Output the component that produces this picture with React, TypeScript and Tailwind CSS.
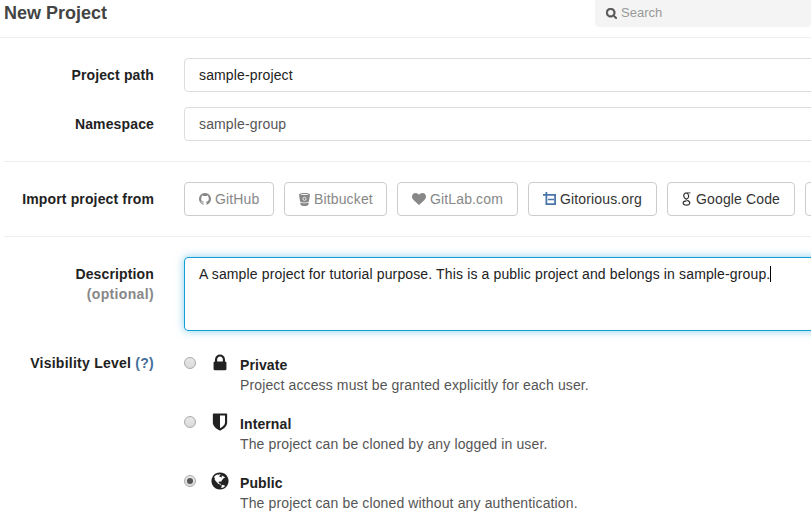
import type { ReactNode } from "react";

const GLYPHS = {
  search:
    "M1216 832q0-185-131.500-316.500t-316.500-131.500-316.500 131.500-131.500 316.500 131.500 316.500 316.500 131.500 316.500-131.500 131.500-316.500zm512 832q0 52-38 90t-90 38q-54 0-90-38l-343-342q-179 124-399 124-143 0-273.500-55.500t-225-150-150-225-55.500-273.500 55.500-273.500 150-225 225-150 273.500-55.500 273.500 55.500 225 150 150 225 55.500 273.500q0 220-124 399l343 343q37 37 37 90z",
  github:
    "M896 128q209 0 385.500 103t279.500 279.500 103 385.500q0 251-146.500 451.500t-378.500 277.500q-27 5-40-7t-13-30q0-3 .5-76.500t.5-134.500q0-97-52-142 57-6 102.500-18t94-39 81-66.500 53-105 20.500-150.500q0-119-79-206 37-91-8-204-28-9-81 11t-92 44l-38 24q-93-26-192-26t-192 26q-16-11-42.500-27t-83.500-38.500-85-13.500q-45 113-8 204-79 87-79 206 0 85 20.500 150t52.500 105 80.500 67 94 39 102.500 18q-39 36-49 103-21 10-45 15t-57 5-65.500-21.500-55.500-62.500q-19-32-48.500-52t-49.500-24l-20-3q-21 0-29 4.500t-5 11.500 9 14 13 12l7 5q22 10 43.500 38t31.500 51l10 23q13 38 44 61.500t67 30 69.500 7 55.500-3.500l23-4q0 38 .5 88.500t.5 54.500q0 18-13 30t-40 7q-232-77-378.500-277.500t-146.500-451.500q0-209 103-385.500t279.500-279.500 385.500-103z",
  heart:
    "M896 1664q-26 0-44-18l-624-602q-10-8-27.500-26t-55.500-65.500-68-97.500-53.500-121-23.500-138q0-220 127-344t351-124q62 0 126.500 21.500t120 58 95.500 68.500 76 68q36-36 76-68t95.500-68.500 120-58 126.500-21.500q224 0 351 124t127 344q0 221-229 450l-623 600q-18 18-44 18z",
  lock: "M640 768h512v-192q0-106-75-181t-181-75-181 75-75 181v192zm832 96v576q0 40-28 68t-68 28h-960q-40 0-68-28t-28-68v-576q0-40 28-68t68-28h32v-192q0-184 132-316t316-132 316 132 132 316v192h32q40 0 68 28t28 68z",
  shield:
    "M1344 960v-640h-448v1137q119-63 213-137 235-184 235-360zm192-768v768q0 86-33.500 170.500t-83 150-118 127.500-126.500 103-121 77.500-89.500 49.500-42.500 20q-12 6-26 6t-26-6q-16-7-42.500-20t-89.500-49.500-121-77.500-126.500-103-118-127.500-83-150-33.500-170.500v-768q0-26 19-45t45-19h1152q26 0 45 19t19 45z",
  globe:
    "M896 128q209 0 385.500 103t279.500 279.500 103 385.500-103 385.500-279.500 279.500-385.500 103-385.500-103-279.500-279.500-103-385.500 103-385.500 279.500-279.500 385.500-103zm274 521q-2 1-9.500 9.500t-13.500 9.500q2 0 4.500-5t5-11 3.500-7q6-7 22-15 14-6 52-12 34-8 51 11-2-2 9.500-13t14.500-12q3-2 15-4.500t15-7.500l2-22q-12 1-17.500-7t-6.500-21q0 2-6 8 0-7-4.500-8t-11.500 1-9 1q-10-3-15-7.500t-8-16.500-4-15q-2-5-9.500-11t-9.500-10q-1-2-2.500-5.500t-3-6.500-4-5.500-5.500-2.500-7 5-7.500 10-4.500 5q-3-2-6-1.500t-4.500 1-4.500 3-5 3.500q-3 2-8.500 3t-8.500 2q15-5-1-11-10-4-16-3 9-4 7.500-12t-8.500-14h5q-1-4-8.500-8.500t-17.500-8.500-13-6q-8-5-34-9.500t-33-.5q-5 6-4.500 10.500t4 14 3.500 12.500q1 6-5.500 13t-6.500 12q0 7 14 15.500t10 21.500q-3 8-16 16t-16 12q-5 8-1.500 18.500t10.500 16.500q2 2 1.500 4t-3.500 4.500-5.500 4-6.500 3.500l-3 2q-11 5-20.500-6t-13.500-26q-7-25-16-30-23-8-29 1-5-13-41-26-25-9-58-4 6-1 0-15-7-15-19-12 3-6 4-17.500t1-13.500q3-13 12-23 1-1 7-8.500t9.500-13.500.5-6q35 4 50-11 5-5 11.500-17t10.500-17q9-6 14-5.500t14.500 5.500 14.500 5q14 1 15.500-11t-7.500-20q12 1 3-17-4-7-8-9-12-4-27 5-8 4 2 8-1-1-9.500 10.500t-16.500 17.500-16-5q-1-1-5.500-13.500t-9.500-13.500q-8 0-16 15 3-8-11-15t-24-8q19-12-8-27-7-4-20.500-5t-19.500 4q-5 7-5.500 11.500t5 8 10.500 5.500 11.500 4 8.500 3q14 10 8 14-2 1-8.500 3.500t-11.500 4.500-6 4q-3 4 0 14t-2 14q-5-5-9-17.500t-7-16.500q7 9-25 6l-10-1q-4 0-16 2t-20.500 1-13.500-8q-4-8 0-20 1-4 4-2-4-3-11-9.500t-10-8.500q-46 15-94 41 6 1 12-1 5-2 13-6.500t10-5.500q34-14 42-7l5-5q14 16 20 25-7-4-30-1-20 6-22 12 7 12 5 18-4-3-11.500-10t-14.500-11-15-5q-16 0-22 1-146 80-235 222 7 7 12 8 4 1 5 9t2.500 11 11.500-3q9 8 3 19 1-1 44 27 19 17 21 21 3 11-10 18-1-2-9-9t-9-4q-3 5 .5 18.500t10.500 12.500q-7 0-9.500 16t-2.500 35.500-1 23.500l2 1q-3 12 5.500 34.500t21.500 19.500q-13 3 20 43 6 8 8 9 3 2 12 7.500t15 10 10 10.500q4 5 10 22.500t14 23.500q-2 6 9.500 20t10.500 23q-1 0-2.500 1t-2.500 1q3 7 15.500 14t15.500 13q1 3 2 10t3 11 8 2q2-20-24-62-15-25-17-29-3-5-5.500-15.500t-4.500-14.500q2 0 6 1.500t8.500 3.500 7.500 4 2 3q-3 7 2 17.500t12 18.500 17 19 12 13q6 6 14 19.500t0 13.500q9 0 20 10.500t17 19.500q5 8 8 26t5 24q2 7 8.500 13.500t12.500 9.500l16 8 13 7q5 2 18.500 10.500t21.500 11.500q10 4 16 4t14.500-2.500 13.500-3.500q15-2 29 15t21 21q36 19 55 11-2 1 .5 7.500t8 15.500 9 14.500 5.500 8.500q5 6 18 15t18 15q6-4 7-9-3 8 7 20t18 10q14-3 14-32-31 15-49-18 0-1-2.500-5.500t-4-8.500-2.500-8.500 0-7.500 5-3q9 0 10-3.500t-2-12.500-4-13q-1-8-11-20t-12-15q-5 9-16 8t-16-9q0 1-1.500 5.500t-1.500 6.500q-13 0-15-1 1-3 2.500-17.500t3.500-22.500q1-4 5.500-12t7.500-14.500 4-12.500-4.500-9.500-17.500-2.500q-19 1-26 20-1 3-3 10.500t-5 11.500-9 7q-7 3-24 2t-24-5q-13-8-22.500-29t-9.500-37q0-10 2.500-26.500t3-25-5.500-24.500q3-2 9-9.500t10-10.500q2-1 4.500-1.500t4.500 0 4-1.500 3-6q-1-1-4-3-3-3-4-3 7 3 28.500-1.500t27.500 1.500q15 11 22-2 0-1-2.500-9.500t-.5-13.500q5 27 29 9 3 3 15.500 5t17.500 5q3 2 7 5.500t5.500 4.500 5-.5 8.500-6.500q10 14 12 24 11 40 19 44 7 3 11 2t4.500-9.500 0-14-1.500-12.500l-1-8v-18l-1-8q-15-3-18.500-12t1.500-18.500 15-18.500q1-1 8-3.500t15.500-6.500 12.500-8q21-19 15-35 7 0 11-9-1 0-5-3t-7.500-5-4.500-2q9-5 2-16 5-3 7.500-11t7.500-10q9 12 21 2 8-8 1-16 5-7 20.500-10.500t18.500-9.500q7 2 8-2t1-12 3-12q4-5 15-9t13-5l17-11q3-4 0-4 18 2 31-11 10-11-6-20 3-6-3-9.500t-15-5.500q3-1 11.500-.5t10.500-1.500q15-10-7-16-17-5-43 12zm-163 877q206-36 351-189-3-3-12.500-4.500t-12.500-3.500q-18-7-24-8 1-7-2.500-13t-8-9-12.500-8-11-7q-2-2-7-6t-7-5.500-7.500-4.500-8.500-2-10 1l-3 1q-3 1-5.500 2.500t-5.500 3-4 3 0 2.500q-21-17-36-22-5-1-11-5.500t-10.500-7-10-1.500-11.500 7q-5 5-6 15t-2 13q-7-5 0-17.500t2-18.500q-3-6-10.500-4.500t-12 4.500-11.500 8.500-9 6.500-8.500 5.500-8.500 7.500q-3 4-6 12t-5 11q-2-4-11.500-6.500t-9.500-5.500q2 10 4 35t5 38q7 31-12 48-27 25-29 40-4 22 12 26 0 7-8 20.500t-7 21.500q0 6 2 16z",
};

function Glyph({ name, viewBox = "0 0 1792 1792", className }: { name: keyof typeof GLYPHS; viewBox?: string; className: string }) {
  return (
    <svg viewBox={viewBox} className={`shrink-0 fill-current ${className}`}>
      <path d={GLYPHS[name]} />
    </svg>
  );
}

function BitbucketIcon() {
  return (
    <svg viewBox="0 0 11 13" className="h-[13px] w-[11px] shrink-0">
      <path fill="currentColor" d="M0 1.600C0 .6 2.500 0 5.500 0S11 .6 11 1.600L10 8.200C9.200 9 7.500 9.500 5.500 9.500S1.800 9 1 8.200zM1.200 9.200C2.300 10 3.900 10.300 5.500 10.300S8.700 10 9.800 9.200L9.300 11.900C8.600 12.600 7.100 13 5.500 13S2.400 12.600 1.700 11.900z" />
      <ellipse cx="5.500" cy="1.600" rx="4" ry=".5" fill="white" />
      <circle cx="5.500" cy="5.800" r="1.600" fill="none" stroke="white" strokeWidth=".8" />
    </svg>
  );
}

function GitoriousIcon() {
  return (
    <svg viewBox="0 0 13 13" className="-mt-0.5 h-[13px] w-[13px] shrink-0" fill="none" stroke="#4a75a8">
      <path strokeWidth="1.800" d="M0 2.900H12.100V12.100H3.400V0" />
      <path strokeWidth="1.500" d="M5 7.500h6" />
    </svg>
  );
}

function GoogleIcon() {
  return (
    <svg viewBox="0 0 10 14" className="h-[14px] w-[10px] shrink-0" fill="none" stroke="#333">
      <ellipse cx="4.200" cy="3.900" rx="2.400" ry="2.900" strokeWidth="1.200" transform="rotate(-12 4.200 3.900)" />
      <path strokeWidth=".9" d="M4.500 .9H8.500M5 6.600C3.500 7.800 4.500 8 5.800 8.700" />
      <path strokeWidth="1.200" d="M5.400 8.400C8.800 9.700 8.500 13.200 4.600 13.200 0 13.200 0 8.900 4.600 8.900" />
    </svg>
  );
}

function ImportButton({ label, icon, width, muted }: { label: string; icon: ReactNode; width: string; muted?: boolean }) {
  return (
    <button
      className={`flex h-[34px] shrink-0 items-center gap-1 rounded border border-[#ccc] pl-3.5 tracking-[0.14px] whitespace-nowrap ${width} ${muted ? "text-[#888]" : "text-[#333]"}`}
    >
      {icon}
      <span>{label}</span>
    </button>
  );
}

function Row({ label, children, className = "" }: { label: ReactNode; children: ReactNode; className?: string }) {
  return (
    <div className={`flex ${className}`}>
      <div className="w-[154px] shrink-0 pt-[7px] text-right font-bold text-[#222]">{label}</div>
      <div className="ml-[30px] w-[680px] shrink-0">{children}</div>
    </div>
  );
}

function Level({ icon, title, text, checked }: { icon: ReactNode; title: string; text: string; checked?: boolean }) {
  return (
    <div className="flex h-[59px]">
      <span className="mt-[7px] flex size-3 shrink-0 items-center justify-center rounded-full border border-[#aaa] bg-linear-to-b from-[#e8e8e8] to-[#dadada]">
        {checked && <span className="size-1.5 rounded-full bg-[#555]" />}
      </span>
      <span className="ml-3.5 flex w-[20px] justify-center pt-[3px] text-[#222]">{icon}</span>
      <div className="ml-2.5 pt-[5px]">
        <div className="font-bold tracking-[0.1px] text-[#222]">{title}</div>
        <div className="tracking-[0.13px] text-[#555]">{text}</div>
      </div>
    </div>
  );
}

export default function App() {
  return (
    <div className="h-[520px] w-[811px] overflow-hidden bg-white font-['Liberation_Sans',Arial,sans-serif] text-sm leading-5 tracking-[0.14px]">
      <header className="flex h-[38px] justify-between border-b border-[#eee] tracking-normal">
        <h1 className="pt-[3px] pl-1 text-lg leading-5 font-bold text-[#444]">New Project</h1>
        <div className="flex h-[27px] w-[216px] items-center rounded-b bg-[#f4f4f4] pb-px pl-[11px] text-[13px] text-[#999]">
          <Glyph name="search" viewBox="64 128 1664 1664" className="mr-1 size-[11px] stroke-current stroke-[70px] text-[#555]" />
          <span>Search</span>
        </div>
      </header>

      <main className="pt-5">
        <Row label="Project path" className="h-[34px]">
          <div className="h-[34px] rounded border border-[#ddd] px-3.5 py-1.5 text-[#222]">sample-project</div>
        </Row>
        <Row label="Namespace" className="mt-[15px] h-[34px]">
          <div className="h-[34px] rounded border border-[#ddd] px-3.5 py-1.5 text-[#555]">sample-group</div>
        </Row>
        <hr className="mt-5 ml-1 border-[#eee]" />
        <Row label="Import project from" className="mt-5 h-[34px]">
          <div className="flex gap-2.5">
            <ImportButton muted label="GitHub" width="w-[90px]" icon={<Glyph name="github" viewBox="128 0 1536 1792" className="h-[14px] w-[12px]" />} />
            <ImportButton muted label="Bitbucket" width="w-[103px]" icon={<BitbucketIcon />} />
            <ImportButton muted label="GitLab.com" width="w-[121px]" icon={<Glyph name="heart" className="size-[14px]" />} />
            <ImportButton label="Gitorious.org" width="w-[129px]" icon={<GitoriousIcon />} />
            <ImportButton label="Google Code" width="w-[128px]" icon={<GoogleIcon />} />
            <ImportButton label="" width="w-[120px]" icon={null} />
          </div>
        </Row>
        <hr className="mt-5 ml-1 border-[#eee]" />
        <Row
          className="mt-5 h-[74px]"
          label={
            <>
              Description
              <br />
              <span className="tracking-[0.35px] text-[#888]">(optional)</span>
            </>
          }
        >
          <div className="flex h-[74px] items-start rounded border border-[#0f9fd6] px-3.5 py-1.5 text-[#222] shadow-[0_0_8px_rgba(15,159,214,0.5)]">
            A sample project for tutorial purpose. This is a public project and belongs in sample-group.
            <span className="mt-0.5 h-4 w-px bg-black" />
          </div>
        </Row>
        <Row
          className="mt-[15px]"
          label={
            <span className="tracking-[0.25px]">
              Visibility Level <span className="text-[#446e9b]">(?)</span>
            </span>
          }
        >
          <div className="pt-1">
            <Level title="Private" text="Project access must be granted explicitly for each user." icon={<Glyph name="lock" className="size-5" />} />
            <Level title="Internal" text="The project can be cloned by any logged in user." icon={<Glyph name="shield" className="size-5" />} />
            <Level checked title="Public" text="The project can be cloned without any authentication." icon={<Glyph name="globe" className="size-5" />} />
          </div>
        </Row>
      </main>
    </div>
  );
}
